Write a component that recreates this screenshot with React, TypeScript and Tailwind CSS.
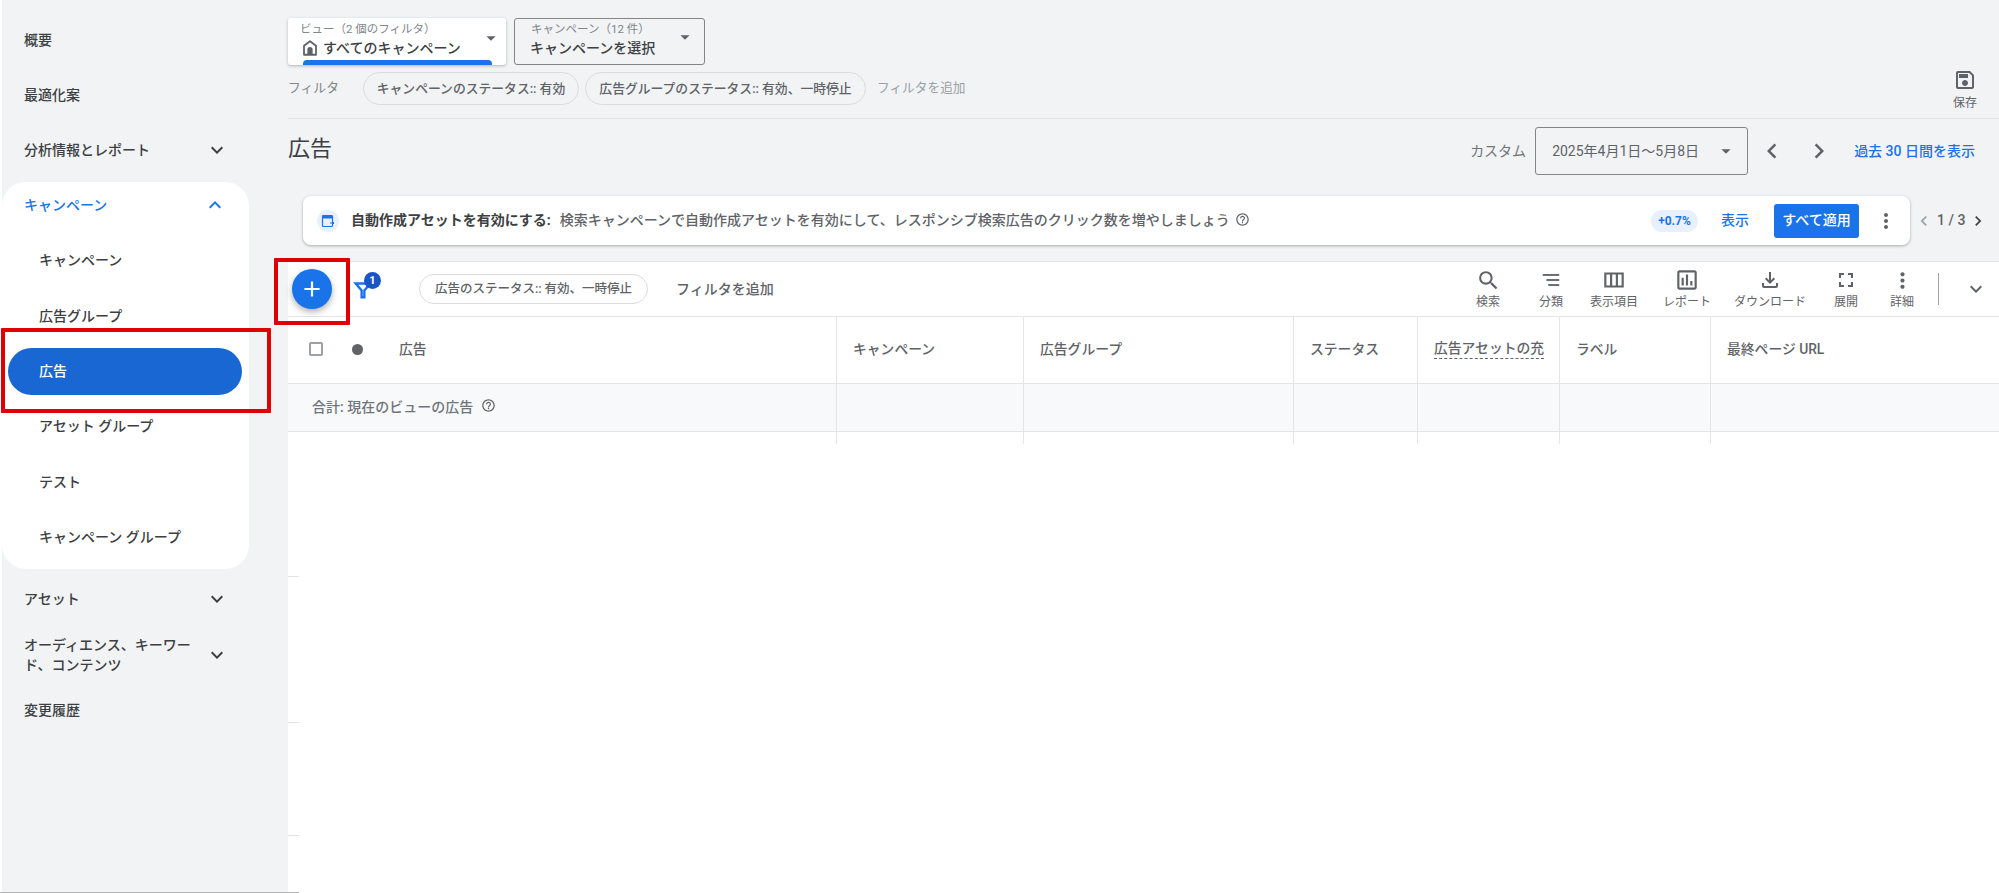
import React from 'react';
import {
  MdAdd, MdArrowDropDown, MdChevronLeft, MdChevronRight, MdHelpOutline, MdKeyboardArrowDown, MdKeyboardArrowUp,
  MdMoreVert, MdOutlineAssessment, MdOutlineSave, MdOutlineViewColumn, MdSearch, MdOutlineFileDownload, MdFullscreen,
} from 'react-icons/md';

function SortIcon({ className }: { className?: string }) {
  return (
    <svg viewBox="0 0 24 24" className={className} fill="#5f6368">
      <rect x="3" y="5.5" width="18" height="2" />
      <rect x="7" y="11" width="14" height="2" />
      <rect x="9" y="16.5" width="12" height="2" />
    </svg>
  );
}

function HomeIcon() {
  return (
    <svg viewBox="0 0 24 24" className="w-[18px] h-[18px] shrink-0" fill="none">
      <path d="M12 3 L20 9 V21 H4 V9 Z" stroke="#5f6368" strokeWidth="2.4" strokeLinejoin="round" />
      <path d="M8.5 21 V14 a3.5 3.5 0 0 1 7 0 V21 Z" fill="#5f6368" />
    </svg>
  );
}

function FilterIcon() {
  return (
    <div className="relative w-[22px] h-[24px]">
      <svg viewBox="0 0 24 24" className="w-[22px] h-[22px] mt-[2px]" fill="none" stroke="#1a73e8" strokeWidth="2.6">
        <path d="M4 6h16l-6.5 7.5V21h-3v-7.5z" />
      </svg>
      <span className="absolute -top-[6px] left-[12px] w-[17px] h-[17px] rounded-full bg-[#1a56c4] text-white text-[11px] font-bold leading-[17px] text-center">1</span>
    </div>
  );
}

function NavRow({ label, chevron, className = '' }: { label: string; chevron?: boolean; className?: string }) {
  return (
    <div className={`flex items-center justify-between pl-[22px] pr-[71px] text-[14px] leading-[20px] font-medium text-[#3c4043] ${className}`}>
      <span className="w-[170px]">{label}</span>
      {chevron && <MdKeyboardArrowDown className="w-[24px] h-[24px] text-[#3c4043] shrink-0 -mr-[12px]" />}
    </div>
  );
}

function SubRow({ label, active }: { label: string; active?: boolean }) {
  if (active) {
    return (
      <div className="h-[55.4px] flex items-center pl-[6px] pr-[7px]">
        <div className="w-full h-[47px] rounded-full bg-[#1967d2] flex items-center pl-[31px] text-[14px] font-medium text-white">{label}</div>
      </div>
    );
  }
  return <div className="h-[55.4px] flex items-center pl-[37px] text-[14px] font-medium text-[#3c4043]">{label}</div>;
}

function Chip({ label, className = '' }: { label: string; className?: string }) {
  return (
    <div className={`rounded-full border border-[#dadce0] flex items-center justify-center font-medium text-[#5f6368] whitespace-nowrap ${className}`}>
      {label}
    </div>
  );
}

function Tool({ label, icon, className }: { label: string; icon: React.ReactNode; className: string }) {
  return (
    <div className={`flex flex-col items-center shrink-0 ${className}`}>
      <div className="h-[26px] flex items-center justify-center">{icon}</div>
      <span className="text-[12px] leading-[18px] text-[#5f6368] whitespace-nowrap">{label}</span>
    </div>
  );
}

const cols = ['', 'キャンペーン', '広告グループ', 'ステータス', '広告アセットの充', 'ラベル', '最終ページ URL'];

export default function App() {
  return (
    <div className="relative flex w-[1999px] h-[893px] overflow-hidden bg-white font-['Roboto','Noto_Sans_CJK_JP',sans-serif]">
      <aside className="ml-[2px] w-[286px] h-full bg-[#f1f3f5] pt-[12px] shrink-0">
        <NavRow label="概要" className="h-[55px]" />
        <NavRow label="最適化案" className="h-[56px]" />
        <NavRow label="分析情報とレポート" chevron className="h-[54px]" />
        <div className="mt-[5px] w-[247px] h-[387px] bg-white rounded-[24px]">
          <div className="h-[46px] flex items-center justify-between pl-[22px] pr-[22px] text-[14px] font-medium text-[#1a73e8]">
            <span>キャンペーン</span>
            <MdKeyboardArrowUp className="w-[24px] h-[24px]" />
          </div>
          <div className="mt-[5px]">
            <SubRow label="キャンペーン" />
            <SubRow label="広告グループ" />
            <SubRow label="広告" active />
            <SubRow label="アセット グループ" />
            <SubRow label="テスト" />
            <SubRow label="キャンペーン グループ" />
          </div>
        </div>
        <NavRow label="アセット" chevron className="h-[60px]" />
        <NavRow label="オーディエンス、キーワード、コンテンツ" chevron className="h-[51px]" />
        <NavRow label="変更履歴" className="h-[60px]" />
      </aside>

      <main className="flex-1 min-w-0 h-full flex flex-col bg-[#f1f3f5]">
        <section className="h-[119px] border-b border-[#e0e3e7] flex justify-between pr-[21px] pt-[18px] shrink-0">
          <div>
            <div className="flex gap-[8px]">
              <div className="relative w-[218px] h-[47px] bg-white rounded-[3px] shadow-[0_1px_3px_rgba(60,64,67,0.35)] pl-[15px] pr-[4px] pt-[3px] flex justify-between">
                <div>
                  <div className="text-[11.5px] leading-[16px] text-[#80868b] whitespace-nowrap -ml-[3px]">ビュー（2 個のフィルタ）</div>
                  <div className="flex items-center gap-[4px] text-[14px] leading-[20px] font-medium text-[#3c4043] whitespace-nowrap -ml-[2px] mt-[1px]">
                    <HomeIcon />
                    すべてのキャンペーン
                  </div>
                </div>
                <MdArrowDropDown className="w-[22px] h-[22px] text-[#5f6368] mt-[6px]" />
                <div className="absolute left-[15px] bottom-0 w-[189px] h-[5px] rounded-t-[4px] bg-[#1a73e8]" />
              </div>
              <div className="w-[191px] h-[47px] rounded-[3px] border border-[#80868b] pl-[15px] pr-[8px] pt-[2px] flex justify-between">
                <div>
                  <div className="text-[11.5px] leading-[16px] text-[#80868b] whitespace-nowrap ml-[1px]">キャンペーン（12 件）</div>
                  <div className="text-[14px] leading-[20px] font-medium text-[#3c4043] whitespace-nowrap mt-[1px]">キャンペーンを選択</div>
                </div>
                <MdArrowDropDown className="w-[22px] h-[22px] text-[#5f6368] mt-[5px]" />
              </div>
            </div>
            <div className="flex items-center mt-[7px]">
              <span className="w-[75px] text-[12.8px] text-[#80868b] -mt-[1px]">フィルタ</span>
              <Chip label="キャンペーンのステータス:: 有効" className="w-[216px] h-[33px] text-[12.8px]" />
              <Chip label="広告グループのステータス:: 有効、一時停止" className="w-[281px] h-[33px] ml-[6px] text-[12.8px]" />
              <span className="ml-[11px] text-[12.7px] text-[#9aa0a6] -mt-[2px] whitespace-nowrap">フィルタを追加</span>
            </div>
          </div>
          <div className="flex flex-col items-center pt-[50px] w-[26px]">
            <MdOutlineSave className="w-[24px] h-[24px] text-[#5f6368] shrink-0" />
            <span className="text-[12px] leading-[18px] text-[#5f6368] whitespace-nowrap mt-[2px]">保存</span>
          </div>
        </section>

        <section className="h-[77px] flex justify-between items-start pt-[8px] pr-[24px] shrink-0">
          <h1 className="text-[22px] leading-[28px] font-normal text-[#3c4043] mt-[8px]">広告</h1>
          <div className="flex items-center h-[48px]">
            <span className="text-[14px] text-[#70757a] mr-[9px] whitespace-nowrap">カスタム</span>
            <div className="w-[213px] h-[48px] rounded-[3px] border border-[#80868b] flex items-center justify-between pl-[16px] pr-[10px] text-[14px] text-[#5f6368]">
              <span className="whitespace-nowrap">2025年4月1日〜5月8日</span>
              <MdArrowDropDown className="w-[22px] h-[22px] text-[#5f6368]" />
            </div>
            <MdChevronLeft className="w-[30px] h-[30px] text-[#5f6368] ml-[9px]" />
            <MdChevronRight className="w-[30px] h-[30px] text-[#5f6368] ml-[17px]" />
            <span className="ml-[20px] text-[14px] font-medium text-[#1a73e8] whitespace-nowrap">過去 30 日間を表示</span>
          </div>
        </section>

        <section className="flex items-center pl-[15px] h-[49px] shrink-0">
          <div className="w-[1607px] h-[49px] bg-white rounded-[8px] shadow-[0_1px_3px_rgba(60,64,67,0.4)] flex items-center pl-[14px] pr-[12px]">
            <div className="w-[22px] h-[22px] rounded-full bg-[#e8f0fe] flex items-center justify-center shrink-0">
              <svg viewBox="0 0 14 14" className="w-[14px] h-[14px]" fill="none">
                <rect x="1.5" y="1.5" width="10" height="11" rx="1" stroke="#1a73e8" strokeWidth="1.2" />
                <rect x="1.5" y="1.5" width="10" height="3" fill="#1a73e8" />
                <path d="M9 9h4m-1.5-1.5L13 9l-1.5 1.5" stroke="#1a73e8" strokeWidth="1" />
              </svg>
            </div>
            <span className="ml-[12px] text-[14px] font-bold text-[#3c4043] whitespace-nowrap">自動作成アセットを有効にする:</span>
            <span className="ml-[9px] text-[14px] font-medium text-[#5f6368] whitespace-nowrap">検索キャンペーンで自動作成アセットを有効にして、レスポンシブ検索広告のクリック数を増やしましょう</span>
            <MdHelpOutline className="ml-[5px] w-[15px] h-[15px] text-[#5f6368] -mt-[2px] shrink-0" />
            <div className="ml-auto w-[47px] h-[22px] rounded-full bg-[#e8f0fe] text-[#1a73e8] text-[12px] font-bold flex items-center justify-center">+0.7%</div>
            <span className="ml-[23px] text-[14px] font-medium text-[#1a73e8] whitespace-nowrap">表示</span>
            <div className="ml-[25px] w-[85px] h-[34px] rounded-[3px] bg-[#1a73e8] text-white text-[14px] font-medium flex items-center justify-center whitespace-nowrap">すべて適用</div>
            <MdMoreVert className="ml-[15px] w-[24px] h-[24px] text-[#5f6368]" />
          </div>
          <div className="flex items-center ml-[4px] text-[14px] text-[#5f6368] font-medium whitespace-nowrap">
            <MdChevronLeft className="w-[20px] h-[20px] text-[#9aa0a6]" />
            <span className="mx-[3px]">1 / 3</span>
            <MdChevronRight className="w-[20px] h-[20px] text-[#3c4043]" />
          </div>
        </section>

        <section className="mt-[16px] flex-1 min-h-0 bg-white flex flex-col">
          <div className="h-[56px] border-y border-[#e3e5e9] flex items-center shrink-0">
            <div className="ml-[4px] w-[40px] h-[40px] rounded-full bg-[#1a73e8] shadow-[0_3px_6px_rgba(60,64,67,0.4)] flex items-center justify-center">
              <MdAdd className="w-[26px] h-[26px] text-white" />
            </div>
            <div className="ml-[20px]"><FilterIcon /></div>
            <Chip label="広告のステータス:: 有効、一時停止" className="w-[229px] h-[30px] ml-[45px] text-[12.5px]" />
            <span className="ml-[28px] text-[14px] text-[#5f6368] font-medium whitespace-nowrap">フィルタを追加</span>
            <div className="ml-auto flex items-center h-full">
              <Tool label="検索" className="w-[40px]" icon={<MdSearch className="w-[25px] h-[25px] text-[#5f6368]" />} />
              <Tool label="分類" className="w-[40px] ml-[23px]" icon={<SortIcon className="w-[22px] h-[22px]" />} />
              <Tool label="表示項目" className="w-[60px] ml-[13px]" icon={<MdOutlineViewColumn className="w-[26px] h-[26px] text-[#5f6368]" />} />
              <Tool label="レポート" className="w-[60px] ml-[13px]" icon={<MdOutlineAssessment className="w-[26px] h-[26px] text-[#5f6368]" />} />
              <Tool label="ダウンロード" className="w-[76px] ml-[15px]" icon={<MdOutlineFileDownload className="w-[24px] h-[24px] text-[#5f6368]" />} />
              <Tool label="展開" className="w-[40px] ml-[18px]" icon={<MdFullscreen className="w-[24px] h-[24px] text-[#5f6368]" />} />
              <Tool label="詳細" className="w-[40px] ml-[16px]" icon={<MdMoreVert className="w-[25px] h-[25px] text-[#5f6368]" />} />
              <div className="ml-[16px] w-px h-[32px] bg-[#a0a4a8]" />
              <MdKeyboardArrowDown className="ml-[25px] mr-[11px] w-[24px] h-[24px] text-[#5f6368]" />
            </div>
          </div>

          <div className="grid grid-cols-[548px_187px_270px_124px_142px_151px_1fr] h-[67px] border-b border-[#e3e5e9] shrink-0">
            <div className="flex items-center pb-[2px]">
              <div className="ml-[21px] w-[14px] h-[14px] rounded-[2px] border-2 border-[#9aa0a6]" />
              <div className="ml-[29px] w-[11px] h-[11px] rounded-full bg-[#5f6368]" />
              <span className="ml-[36px] text-[13.8px] font-medium text-[#5f6368]">広告</span>
            </div>
            {cols.slice(1).map((c) => (
              <div key={c} className="border-l border-[#e3e5e9] flex items-center pl-[16px] pb-[2px] overflow-hidden">
                <span className={`text-[13.8px] font-medium text-[#5f6368] whitespace-nowrap ${c === '広告アセットの充' ? 'border-b border-dashed border-[#5f6368] leading-[19px]' : ''}`}>{c}</span>
              </div>
            ))}
          </div>

          <div className="grid grid-cols-[548px_187px_270px_124px_142px_151px_1fr] h-[48px] bg-[#f8f9fa] border-b border-[#e3e5e9] shrink-0">
            <div className="flex items-center pl-[24px] text-[14px] font-medium text-[#70757a]">
              <span className="whitespace-nowrap">合計: 現在のビューの広告</span>
              <MdHelpOutline className="ml-[8px] w-[15px] h-[15px] -mt-[4px] text-[#5f6368]" />
            </div>
            {cols.slice(1).map((c) => <div key={c} className="border-l border-[#e3e5e9]" />)}
          </div>

          <div className="grid grid-cols-[548px_187px_270px_124px_142px_151px_1fr] h-[12px] shrink-0">
            <div />
            {cols.slice(1).map((c) => <div key={c} className="border-l border-[#e3e5e9]" />)}
          </div>

          <div className="w-[11px] h-px bg-[#e0e3e7] mt-[132px] shrink-0" />
          <div className="w-[11px] h-px bg-[#e0e3e7] mt-[145px] shrink-0" />
          <div className="w-[11px] h-px bg-[#e0e3e7] mt-[112px] shrink-0" />
        </section>
      </main>

      <div className="absolute left-0 bottom-0 w-[299px] h-px bg-[#b4b4b4]" />
      <div className="absolute left-[1px] top-[328px] w-[270px] h-[85px] border-[4px] border-[#e00000] rounded-[1px]" />
      <div className="absolute left-[274px] top-[258px] w-[76px] h-[67px] border-[4px] border-[#e00000] rounded-[1px]" />
    </div>
  );
}
